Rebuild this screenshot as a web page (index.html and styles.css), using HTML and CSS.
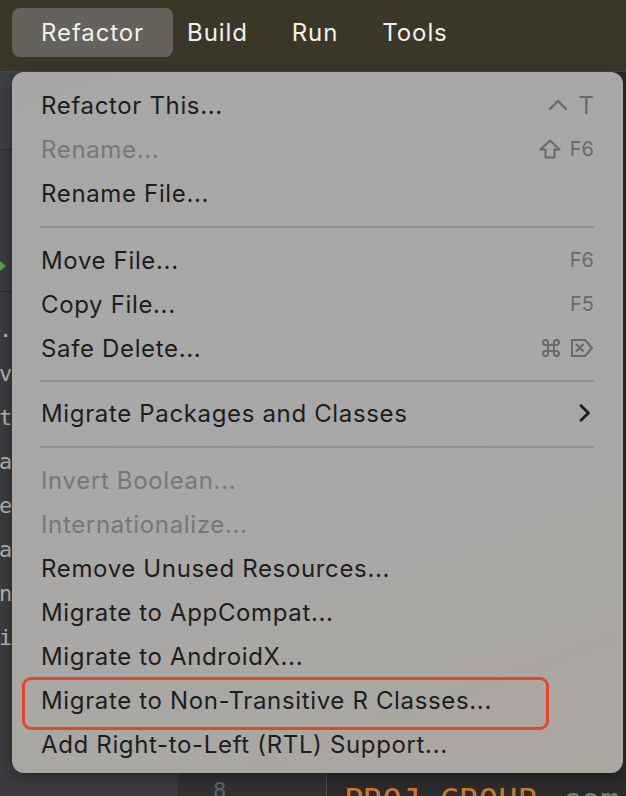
FILE: index.html
```html
<!DOCTYPE html>
<html>
<head>
<meta charset="utf-8">
<link rel="stylesheet" href="styles.css">
</head>
<body>
<header class="menubar">
  <span class="mb-item active">Refactor</span>
  <span class="mb-item">Build</span>
  <span class="mb-item">Run</span>
  <span class="mb-item">Tools</span>
</header>
<div class="workspace">
  <aside class="project">
    <div class="proj-top"></div>
    <div class="proj-row arrow-row"><span class="tri"></span></div>
    <div class="proj-code">
      <span>.</span><span>v</span><span>t</span><span>a</span><span>e</span><span>a</span><span>n</span><span>i</span>
    </div>
  </aside>
  <div class="gutter"><span class="ln">8</span></div>
  <div class="editor"><span class="kw">PROJ_GROUP</span><span class="str">com</span></div>
</div>

<div class="menu">
  <div class="item"><span class="label">Refactor This...</span>
    <span class="sc"><svg width="20" height="12" viewBox="0 0 20 12"><path d="M2 10 L10 2 L18 10" fill="none" stroke="currentColor" stroke-width="2.4" stroke-linecap="round" stroke-linejoin="round"/></svg><span class="sc-t">T</span></span></div>
  <div class="item disabled"><span class="label">Rename...</span>
    <span class="sc"><svg width="22" height="20" viewBox="0 0 22 20"><path d="M11 1.5 L20.5 10.5 H15.5 V18.5 H6.5 V10.5 H1.5 Z" fill="none" stroke="currentColor" stroke-width="2" stroke-linejoin="round"/></svg><span>F6</span></span></div>
  <div class="item"><span class="label">Rename File...</span></div>
  <div class="sep s1"></div>
  <div class="item"><span class="label">Move File...</span><span class="sc"><span>F6</span></span></div>
  <div class="item"><span class="label">Copy File...</span><span class="sc"><span>F5</span></span></div>
  <div class="item"><span class="label">Safe Delete...</span>
    <span class="sc"><svg width="20" height="20" viewBox="0 0 20 20"><path d="M7 15.5 V4.5 A2.5 2.5 0 1 0 4.5 7 H15.5 A2.5 2.5 0 1 0 13 4.5 V15.5 A2.5 2.5 0 1 0 15.5 13 H4.5 A2.5 2.5 0 1 0 7 15.5 Z" fill="none" stroke="currentColor" stroke-width="2" stroke-linejoin="round"/></svg>
    <svg width="24" height="20" viewBox="0 0 24 20"><path d="M2 2 H15 L22 10 L15 18 H2 Z" fill="none" stroke="currentColor" stroke-width="2" stroke-linejoin="round"/><path d="M6.5 6.5 L13 13 M13 6.5 L6.5 13" stroke="currentColor" stroke-width="2" stroke-linecap="round"/></svg></span></div>
  <div class="sep s2"></div>
  <div class="item"><span class="label">Migrate Packages and Classes</span>
    <span class="sc chev"><svg width="12" height="18" viewBox="0 0 12 18"><path d="M2 1.8 L9.5 9 L2 16.2" fill="none" stroke="currentColor" stroke-width="2.8" stroke-linecap="round" stroke-linejoin="round"/></svg></span></div>
  <div class="sep s3"></div>
  <div class="item disabled"><span class="label">Invert Boolean...</span></div>
  <div class="item disabled"><span class="label">Internationalize...</span></div>
  <div class="item"><span class="label">Remove Unused Resources...</span></div>
  <div class="item"><span class="label">Migrate to AppCompat...</span></div>
  <div class="item"><span class="label">Migrate to AndroidX...</span></div>
  <div class="item marked"><span class="label">Migrate to Non-Transitive R Classes...</span></div>
  <div class="item"><span class="label">Add Right-to-Left (RTL) Support...</span></div>
</div>
</body>
</html>
```

FILE: styles.css
```css
* { box-sizing: border-box; }
html, body { margin: 0; padding: 0; }
body {
  width: 626px;
  height: 796px;
  overflow: hidden;
  position: relative;
  background: #2b2b2b;
  font-family: Inter, "Noto Sans", sans-serif;
}
.menubar {
  height: 72px;
  background: #3a3729;
  border-bottom: 1px solid #4e4939;
  display: flex;
  align-items: flex-start;
  padding: 8px 0 0 12px;
}
.mb-item {
  color: #f2f1ec;
  font-size: 24px;
  letter-spacing: 0.9px;
  height: 49px;
  line-height: 49px;
  padding: 0 22px;
}
.mb-item.active {
  background: #64625a;
  border-radius: 8px;
  padding: 0 29px;
  margin-right: -8px;
}
.workspace {
  display: flex;
  height: 724px;
}
.project {
  width: 178px;
  background: #3b3c3f;
  display: flex;
  flex-direction: column;
}
.proj-top {
  height: 78px;
  background: #3e3f42;
  border-bottom: 1px solid #2a2b2d;
}
.arrow-row {
  height: 142px;
  position: relative;
  border-bottom: 1px solid #2a2b2d;
}
.tri {
  position: absolute;
  left: 0;
  top: 111px;
  width: 0; height: 0;
  border-top: 5px solid transparent;
  border-bottom: 5px solid transparent;
  border-left: 6px solid #5a9e4c;
}
.proj-code {
  display: flex;
  flex-direction: column;
  padding-top: 16px;
  font-family: "DejaVu Sans Mono", monospace;
  font-size: 22px;
  color: #b4b4b4;
}
.proj-code span {
  height: 44px;
  line-height: 44px;
  margin-left: -1px;
}
.gutter {
  width: 149px;
  background: #303133;
  border-right: 1px solid #4a4b4d;
  display: flex;
  align-items: flex-end;
  justify-content: flex-start;
}
.ln {
  font-family: "DejaVu Sans Mono", monospace;
  font-size: 22px;
  color: #606366;
  padding-left: 35px;
  line-height: 20px;
  height: 15px;
  overflow: hidden;
}
.editor {
  flex: 1;
  background: #2b2b2b;
  display: flex;
  align-items: flex-end;
  padding-left: 17px;
  font-family: "DejaVu Sans Mono", monospace;
  font-size: 32px;
  height: 724px;
}
.editor span { height: 17px; overflow: hidden; display: inline-block; line-height: 42px; }
.kw { color: #cc7832; }
.str { color: #6a8759; margin-left: 25px; }

.menu {
  position: absolute;
  left: 12px;
  top: 72px;
  width: 611px;
  height: 701px;
  border-radius: 12px;
  background: linear-gradient(160deg, #a7a7a8 0%, #a8a8a8 45%, #aaa7a3 85%, #aca6a0 100%);
  padding: 11px 29px 7px 29px;
  display: flex;
  flex-direction: column;
  box-shadow: 0 4px 14px rgba(0,0,0,0.35);
}
.item {
  height: 44px;
  flex: none;
  display: flex;
  align-items: center;
  justify-content: space-between;
  font-size: 24px;
  letter-spacing: 0.65px;
  color: #1d1d1d;
  position: relative;
}
.item.disabled .label { color: #777777; }
.sep {
  flex: none;
  height: 23px;
  display: flex;
  align-items: center;
}
.sep.s2 { height: 21px; }
.sep::before {
  content: "";
  display: block;
  width: 558px;
  margin-left: -1px;
  height: 2px;
  background: #909090;
}
.sc {
  display: flex;
  align-items: center;
  gap: 9px;
  color: #6a6a6a;
  font-size: 20px;
  letter-spacing: 0;
}
.sc-t { font-size: 24px; margin-left: 2px; }
.chev { color: #1d1d1d; margin-right: 3px; }
.marked::before {
  content: "";
  position: absolute;
  left: -19px;
  top: -1px;
  width: 521px;
  height: 47px;
  border: 3px solid #e8442b;
  border-radius: 9px;
}
```
